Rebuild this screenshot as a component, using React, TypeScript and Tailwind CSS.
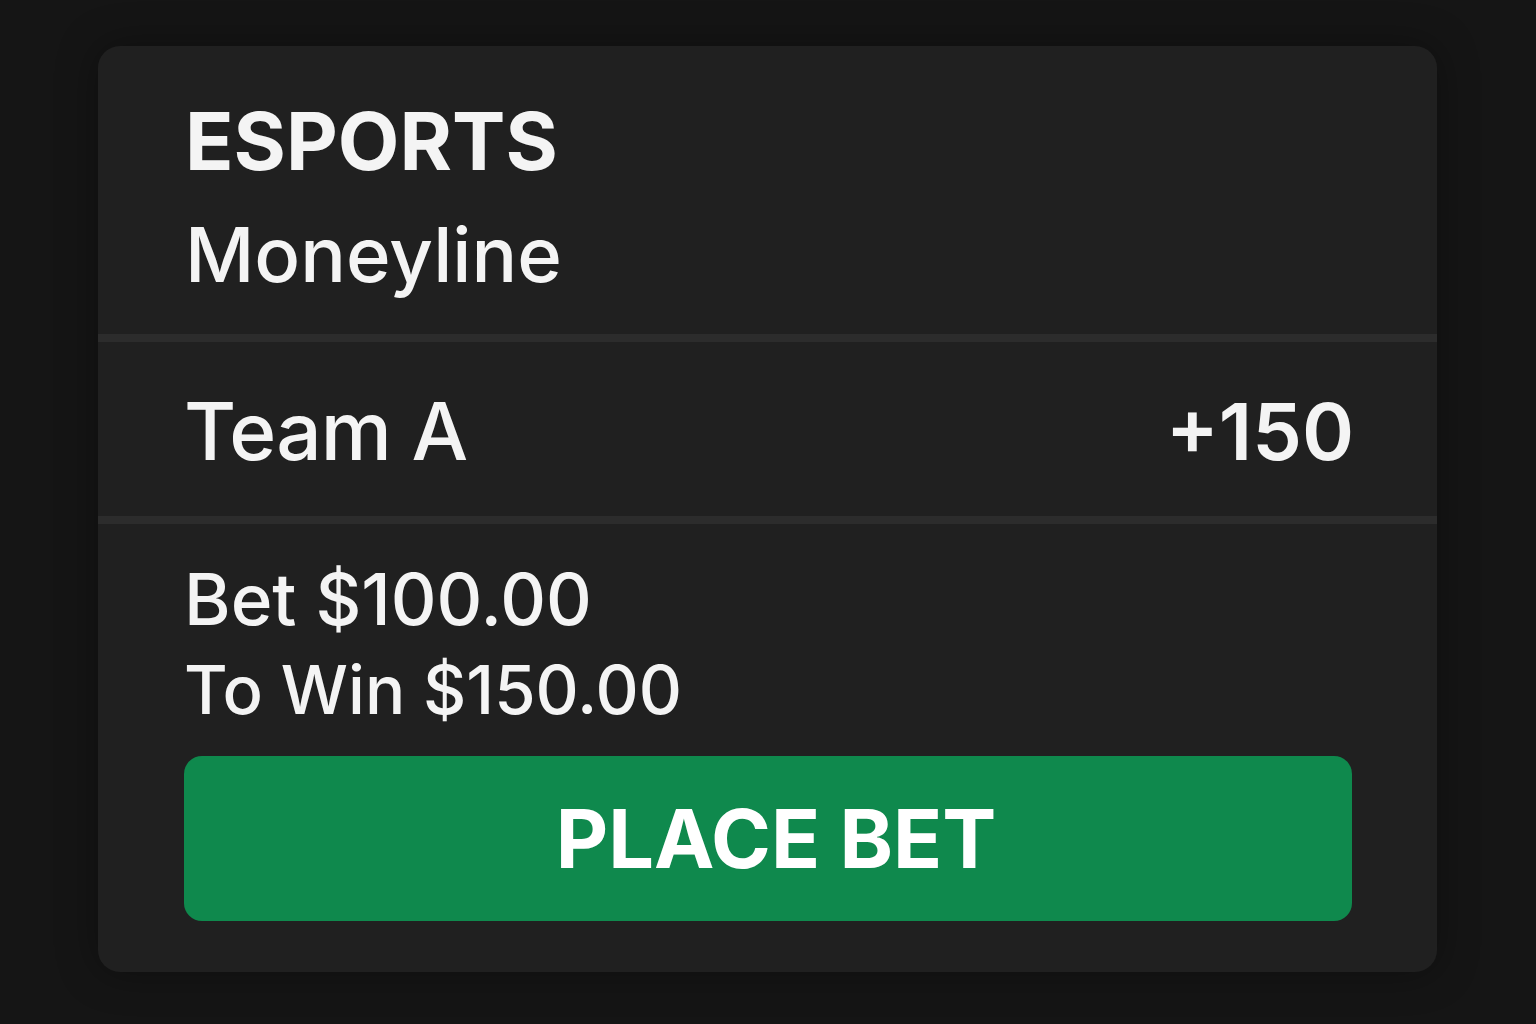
export default function App() {
  return (
    <div className="min-h-screen w-full bg-[#151515] flex" style={{ fontFamily: 'Inter, "Noto Sans", sans-serif' }}>
      <div className="mt-[46px] ml-[98px] w-[1339px] h-[926px] rounded-[22px] bg-[#202020] shadow-[0_0_40px_rgba(0,0,0,0.35)] flex flex-col overflow-hidden text-[#f4f4f4]">
        {/* Market header */}
        <div className="h-[288px] px-[87px] pt-[55px] flex flex-col">
          <div className="text-[80px] leading-[80px] font-bold">ESPORTS</div>
          <div className="mt-[35px] text-[76px] leading-[76px] font-medium">Moneyline</div>
        </div>
        <div className="h-[8px] bg-[#2c2c2c]" />
        {/* Selection */}
        <div className="h-[174px] pl-[86px] pr-[83px] pt-[4px] flex items-center justify-between">
          <div className="text-[80px] leading-[80px] font-medium tracking-[-0.01em]">Team A</div>
          <div className="text-[79px] leading-[79px] font-semibold">+150</div>
        </div>
        <div className="h-[8px] bg-[#2c2c2c]" />
        {/* Stake and payout */}
        <div className="flex-1 px-[86px] pt-[39px] flex flex-col">
          <div className="text-[71px] leading-[72px] font-medium">Bet $100.00</div>
          <div className="mt-[20px] text-[67px] leading-[70px] font-medium">To Win $150.00</div>
          <button className="mt-[31px] w-[1168px] h-[165px] rounded-[18px] bg-[#0f894d] flex items-center justify-center pl-[16px] text-white text-[81px] leading-[82px] font-bold">
            PLACE BET
          </button>
        </div>
      </div>
    </div>
  );
}
